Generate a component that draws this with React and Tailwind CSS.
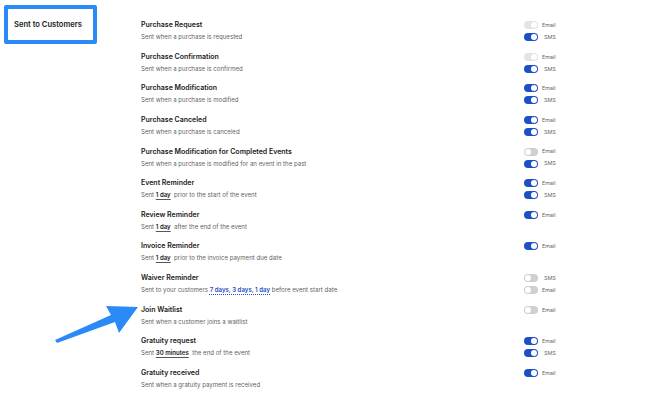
import React from "react";

const rows = [
  { title: "Purchase Request", desc: "Sent when a purchase is requested", toggles: [["Email", "disabled"], ["SMS", "on"]] },
  { title: "Purchase Confirmation", desc: "Sent when a purchase is confirmed", toggles: [["Email", "disabled"], ["SMS", "on"]] },
  { title: "Purchase Modification", desc: "Sent when a purchase is modified", toggles: [["Email", "on"], ["SMS", "on"]] },
  { title: "Purchase Canceled", desc: "Sent when a purchase is canceled", toggles: [["Email", "on"], ["SMS", "on"]] },
  { title: "Purchase Modification for Completed Events", desc: "Sent when a purchase is modified for an event in the past", toggles: [["Email", "off"], ["SMS", "on"]] },
  { title: "Event Reminder", desc: ["Sent ", "1 day", "  prior to the start of the event"], toggles: [["Email", "on"], ["SMS", "on"]] },
  { title: "Review Reminder", desc: ["Sent ", "1 day", "  after the end of the event"], toggles: [["Email", "on"]] },
  { title: "Invoice Reminder", desc: ["Sent ", "1 day", "  prior to the invoice payment due date"], toggles: [["Email", "on"]] },
  { title: "Waiver Reminder", desc: ["Sent to your customers ", "7 days, 3 days, 1 day", " before event start date"], blue: true, toggles: [["SMS", "off"], ["Email", "off"]] },
  { title: "Join Waitlist", desc: "Sent when a customer joins a waitlist", toggles: [["Email", "off"]] },
  { title: "Gratuity request", desc: ["Sent ", "30 minutes", "  the end of the event"], toggles: [["Email", "on"], ["SMS", "on"]] },
  { title: "Gratuity received", desc: "Sent when a gratuity payment is received", toggles: [["Email", "on"]] },
];

function Toggle({ state }) {
  if (state === "on") {
    return (
      <span className="flex items-center justify-end w-[14px] h-[8px] rounded-full bg-[#1f4fc4] px-[1px]">
        <span className="w-[6px] h-[6px] rounded-full bg-white" />
      </span>
    );
  }
  if (state === "disabled") {
    return (
      <span className="flex items-center justify-end w-[14px] h-[8px] rounded-full bg-[#e4e4e4] px-[1px]">
        <span className="w-[6px] h-[6px] rounded-full bg-white" />
      </span>
    );
  }
  return (
    <span className="flex items-center justify-start w-[14px] h-[8px] rounded-full bg-[#cfcfcf] px-[1px]">
      <span className="w-[6px] h-[6px] rounded-full bg-white" />
    </span>
  );
}

function Desc({ row }) {
  if (typeof row.desc === "string") return row.desc;
  const [a, b, c] = row.desc;
  return (
    <>
      {a}
      <span
        className={
          row.blue
            ? "font-semibold text-[#1f4fc4] underline decoration-dotted underline-offset-2"
            : "font-semibold text-[#222] underline underline-offset-2 decoration-[#555]"
        }
      >
        {b}
      </span>
      {c}
    </>
  );
}

export default function App() {
  return (
    <div
      className="relative w-[670px] h-[405px] bg-white flex overflow-hidden"
      style={{ fontFamily: "Inter, 'Liberation Sans', sans-serif" }}
    >
      <div className="w-[141px] shrink-0 pt-[5px] pl-[4px]">
        <div className="w-[93px] h-[39px] border-[4px] border-[#2a8af6] rounded-[2px] flex items-center pl-[6px]">
          <span className="text-[7.6px] font-semibold text-[#1a1a1a]">Sent to Customers</span>
        </div>
      </div>

      <div className="flex flex-col gap-[7.64px] pt-[19px] w-[460px]">
        {rows.map((row) => (
          <div key={row.title} className="flex">
            <div className="w-[383px]">
              <div className="text-[7px] leading-[12px] font-semibold text-[#1a1a1a]">{row.title}</div>
              <div className="text-[6.1px] leading-[12px] text-[#5f5f5f] whitespace-pre">
                <Desc row={row} />
              </div>
            </div>
            <div className="flex flex-col">
              {row.toggles.map(([label, state]) => (
                <div key={label} className="flex items-center h-[12px] gap-[4px]">
                  <Toggle state={state} />
                  <span
                    className={
                      "text-[5.4px] text-[#666] " + (label === "SMS" ? "pl-[2px]" : "")
                    }
                  >
                    {label}
                  </span>
                </div>
              ))}
            </div>
          </div>
        ))}
      </div>

      <svg className="absolute left-0 top-0" width="670" height="405" viewBox="0 0 670 405">
        <polygon
          points="55,340 111,315 106,306 138,307 119,333 115,322 57,343"
          fill="#2a8af6"
        />
      </svg>
    </div>
  );
}
